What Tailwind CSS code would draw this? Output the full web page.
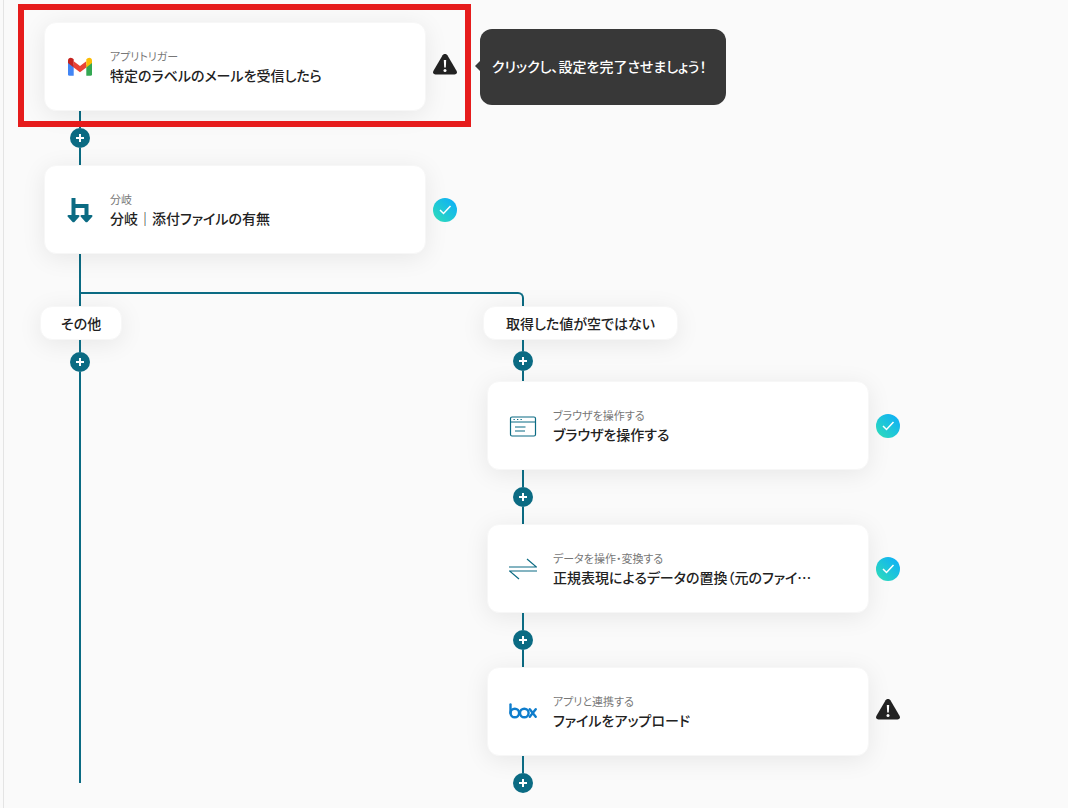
<!DOCTYPE html>
<html lang="ja">
<head>
    <meta charset="utf-8">
    <meta name="viewport" content="width=device-width, initial-scale=1">
    <script src="https://cdn.jsdelivr.net/npm/@tailwindcss/browser@4"></script>
    <title>フロー編集</title>
</head>
<body class="bg-[#fafafa] font-['Noto_Sans_CJK_JP',sans-serif] [font-feature-settings:'palt'] text-[#222]">

<!-- shared icons -->
<svg class="absolute h-0 w-0" xmlns="http://www.w3.org/2000/svg">
    <defs>
        <linearGradient id="done" x1="0" y1="1" x2="1" y2="0">
            <stop offset="0.1" stop-color="#2cdabd"/>
            <stop offset="0.9" stop-color="#0fb0f6"/>
        </linearGradient>
    </defs>
    <symbol id="plus" viewBox="0 0 20 20">
        <path d="M10 6v8M6 10h8" fill="none" stroke="#fff" stroke-width="2"/>
    </symbol>
    <symbol id="warning" viewBox="0 0 24 24">
        <path d="M9.6 1.2C10.6-.5 13.4-.5 14.4 1.2L23.5 16.8C24.6 18.7 23.5 20.5 21.4 20.5H2.6C.5 20.5-.6 18.7.5 16.8Z" fill="#222"/>
        <path d="M10.800 6h2.400l-.4 7.500h-1.600z" fill="#fff"/>
        <circle cx="12" cy="16.400" r="1.500" fill="#fff"/>
    </symbol>
</svg>

<main class="ml-[3px] min-h-screen overflow-hidden border-l border-[#e4e4e4] pt-[22px] pl-9">

    <!-- trigger -->
    <div class="ml-1 flex items-center">
        <div class="relative flex items-center">
            <button class="flex h-[89px] w-[382px] items-center gap-4 rounded-xl border border-[#f7f7f7] bg-white pr-6 pl-[21px] text-left shadow-[0_4px_24px_rgba(0,0,0,0.08)]">
                <svg class="h-7 w-7 shrink-0" viewBox="0 0 28 28">
                    <path d="M2 9v12.300a1.500 1.500 0 0 0 1.500 1.500H7.700V12z" fill="#4285f4"/>
                    <path d="M20.300 12v10.800h4.200a1.500 1.500 0 0 0 1.500-1.500V9z" fill="#34a853"/>
                    <path d="M7.700 8.200L14 13l6.300-4.800v6.200L14 19.200l-6.300-4.800z" fill="#ea4335"/>
                    <path d="M2 7.500C2 5 4.700 4 6.400 5.300L7.700 6.300v8.100L2 10.100z" fill="#c5221f"/>
                    <path d="M26 7.500C26 5 23.300 4 21.600 5.300L20.300 6.300v8.100L26 10.100z" fill="#fbbc04"/>
                </svg>
                <span class="flex min-w-0 flex-col pb-0.5">
                    <span class="text-[11px] leading-[18px] text-[#777]">アプリトリガー</span>
                    <span class="truncate text-sm leading-5 font-medium">特定のラベルのメールを受信したら</span>
                </span>
            </button>
            <svg class="mb-0.5 ml-[7px] h-6 w-6" role="img" aria-label="未設定"><use href="#warning"/></svg>
            <div class="pointer-events-none absolute -top-[18px] -right-[14px] -bottom-4 -left-[26px] border-6 border-[#e61c1c]"></div>
        </div>
        <div class="relative ml-[23px] flex h-[76px] min-w-[246px] items-center rounded-xl bg-[#383838] px-3 pb-0.5 text-sm font-medium text-white">
            <svg class="absolute -left-[5px] h-3 w-[6px]" viewBox="0 0 6 12"><path d="M6 0v12L0 6z" fill="#383838"/></svg>
            クリックし、設定を完了させましょう！
        </div>
    </div>

    <div class="ml-[30px] flex w-5 flex-col items-center">
        <span class="h-[17px] w-[2px] bg-[#0b6b83]"></span>
        <button class="h-5 w-5 rounded-full bg-[#0b6b83]" aria-label="追加"><svg class="h-5 w-5"><use href="#plus"/></svg></button>
        <span class="h-[17px] w-[2px] bg-[#0b6b83]"></span>
    </div>

    <!-- branch step -->
    <div class="ml-1 flex items-center">
        <button class="flex h-[89px] w-[382px] items-center gap-4 rounded-xl border border-[#f7f7f7] bg-white pr-6 pl-[21px] text-left shadow-[0_4px_24px_rgba(0,0,0,0.08)]">
            <svg class="h-7 w-7 shrink-0" viewBox="0 0 28 28">
                <path d="M7.500 2v18M7.500 10h13v10" fill="none" stroke="#0b6b83" stroke-width="4"/>
                <path d="M2.500 19h10c.9 0 1.300 1 .7 1.700l-4.500 5c-.7.700-1.700.700-2.400 0l-4.500-5c-.6-.7-.2-1.700.7-1.700z" fill="#0b6b83"/>
                <path d="M15.500 19h10c.9 0 1.300 1 .7 1.700l-4.500 5c-.7.700-1.700.700-2.400 0l-4.500-5c-.6-.7-.2-1.700.7-1.700z" fill="#0b6b83"/>
            </svg>
            <span class="flex min-w-0 flex-col pb-0.5">
                <span class="text-[11px] leading-[18px] text-[#777]">分岐</span>
                <span class="truncate text-sm leading-5 font-medium">分岐｜添付ファイルの有無</span>
            </span>
        </button>
        <svg class="ml-[7px] h-6 w-6" viewBox="0 0 24 24" role="img" aria-label="設定済み">
            <circle cx="12" cy="12" r="12" fill="url(#done)"/>
            <path d="M7 12l3.500 3.500L17.500 8" fill="none" stroke="#fff" stroke-width="1.500"/>
        </svg>
    </div>

    <div class="ml-[39px] h-[38px] w-[2px] bg-[#0b6b83]"></div>
    <div class="ml-[39px] h-[14px] w-[445px] rounded-tr-md border-2 border-b-0 border-[#0b6b83]"></div>

    <div class="flex">
        <!-- other -->
        <section class="flex w-[443px] shrink-0 flex-col items-start">
            <button class="h-[34px] rounded-xl border border-[#f7f7f7] bg-white px-5 text-sm font-medium shadow-[0_4px_24px_rgba(0,0,0,0.08)]">その他</button>
            <div class="mb-[10px] ml-[30px] flex w-5 flex-1 flex-col items-center">
                <span class="h-3 w-[2px] bg-[#0b6b83]"></span>
                <button class="h-5 w-5 rounded-full bg-[#0b6b83]" aria-label="追加"><svg class="h-5 w-5"><use href="#plus"/></svg></button>
                <span class="w-[2px] flex-1 bg-[#0b6b83]"></span>
            </div>
        </section>

        <!-- value is not empty -->
        <section class="flex flex-col items-start">
            <button class="h-[34px] min-w-[195px] rounded-xl border border-[#f7f7f7] bg-white px-5 text-sm font-medium shadow-[0_4px_24px_rgba(0,0,0,0.08)]">取得した値が空ではない</button>
            <div class="ml-[30px] flex w-5 flex-col items-center">
                <span class="h-[11px] w-[2px] bg-[#0b6b83]"></span>
                <button class="h-5 w-5 rounded-full bg-[#0b6b83]" aria-label="追加"><svg class="h-5 w-5"><use href="#plus"/></svg></button>
                <span class="h-[10px] w-[2px] bg-[#0b6b83]"></span>
            </div>

            <div class="ml-1 flex items-center">
                <button class="flex h-[89px] w-[382px] items-center gap-4 rounded-xl border border-[#f7f7f7] bg-white pr-6 pl-[21px] text-left shadow-[0_4px_24px_rgba(0,0,0,0.08)]">
                    <svg class="h-7 w-7 shrink-0" viewBox="0 0 28 28" fill="none" stroke="#0b6b83" stroke-width="1.200">
                        <rect x="1.500" y="5" width="25" height="19" rx="1.500"/>
                        <path d="M1.500 10h25M6 15h10.500M6 19h10"/>
                        <path d="M4.500 7.500h1.300M8 7.500h1.300M11.500 7.500h1.300"/>
                    </svg>
                    <span class="flex min-w-0 flex-col pb-0.5">
                        <span class="text-[11px] leading-[18px] text-[#777]">ブラウザを操作する</span>
                        <span class="truncate text-sm leading-5 font-medium">ブラウザを操作する</span>
                    </span>
                </button>
                <svg class="ml-[7px] h-6 w-6" viewBox="0 0 24 24" role="img" aria-label="設定済み">
                    <circle cx="12" cy="12" r="12" fill="url(#done)"/>
                    <path d="M7 12l3.500 3.500L17.500 8" fill="none" stroke="#fff" stroke-width="1.500"/>
                </svg>
            </div>

            <div class="ml-[30px] flex w-5 flex-col items-center">
                <span class="h-[17px] w-[2px] bg-[#0b6b83]"></span>
                <button class="h-5 w-5 rounded-full bg-[#0b6b83]" aria-label="追加"><svg class="h-5 w-5"><use href="#plus"/></svg></button>
                <span class="h-[17px] w-[2px] bg-[#0b6b83]"></span>
            </div>

            <div class="ml-1 flex items-center">
                <button class="flex h-[89px] w-[382px] items-center gap-4 rounded-xl border border-[#f7f7f7] bg-white pr-6 pl-[21px] text-left shadow-[0_4px_24px_rgba(0,0,0,0.08)]">
                    <svg class="h-7 w-7 shrink-0" viewBox="0 0 28 28" fill="none" stroke="#0b6b83" stroke-width="1.200">
                        <path d="M0 12h27.500L18 4"/>
                        <path d="M28 16H.5L10 24"/>
                    </svg>
                    <span class="flex min-w-0 flex-col pb-0.5">
                        <span class="text-[11px] leading-[18px] text-[#777]">データを操作・変換する</span>
                        <span class="truncate text-sm leading-5 font-medium">正規表現によるデータの置換（元のファイ…</span>
                    </span>
                </button>
                <svg class="ml-[7px] h-6 w-6" viewBox="0 0 24 24" role="img" aria-label="設定済み">
                    <circle cx="12" cy="12" r="12" fill="url(#done)"/>
                    <path d="M7 12l3.500 3.500L17.500 8" fill="none" stroke="#fff" stroke-width="1.500"/>
                </svg>
            </div>

            <div class="ml-[30px] flex w-5 flex-col items-center">
                <span class="h-[17px] w-[2px] bg-[#0b6b83]"></span>
                <button class="h-5 w-5 rounded-full bg-[#0b6b83]" aria-label="追加"><svg class="h-5 w-5"><use href="#plus"/></svg></button>
                <span class="h-[17px] w-[2px] bg-[#0b6b83]"></span>
            </div>

            <div class="ml-1 flex items-center">
                <button class="flex h-[89px] w-[382px] items-center gap-4 rounded-xl border border-[#f7f7f7] bg-white pr-6 pl-[21px] text-left shadow-[0_4px_24px_rgba(0,0,0,0.08)]">
                    <svg class="h-7 w-7 shrink-0" viewBox="0 0 28 28" fill="none" stroke="#0f7dcc" stroke-width="2.400" stroke-linecap="round">
                        <path d="M1.500 6.500v8.500"/>
                        <circle cx="5.800" cy="15" r="4.300"/>
                        <circle cx="15.300" cy="15" r="4.300"/>
                        <path d="M20.800 11.300l5.900 7.500M26.700 11.300l-5.900 7.500"/>
                    </svg>
                    <span class="flex min-w-0 flex-col pb-0.5">
                        <span class="text-[11px] leading-[18px] text-[#777]">アプリと連携する</span>
                        <span class="truncate text-sm leading-5 font-medium">ファイルをアップロード</span>
                    </span>
                </button>
                <svg class="mb-0.5 ml-[7px] h-6 w-6" role="img" aria-label="未設定"><use href="#warning"/></svg>
            </div>

            <div class="ml-[30px] flex w-5 flex-col items-center">
                <span class="h-[17px] w-[2px] bg-[#0b6b83]"></span>
                <button class="h-5 w-5 rounded-full bg-[#0b6b83]" aria-label="追加"><svg class="h-5 w-5"><use href="#plus"/></svg></button>
            </div>
        </section>
    </div>
</main>

</body>
</html>
